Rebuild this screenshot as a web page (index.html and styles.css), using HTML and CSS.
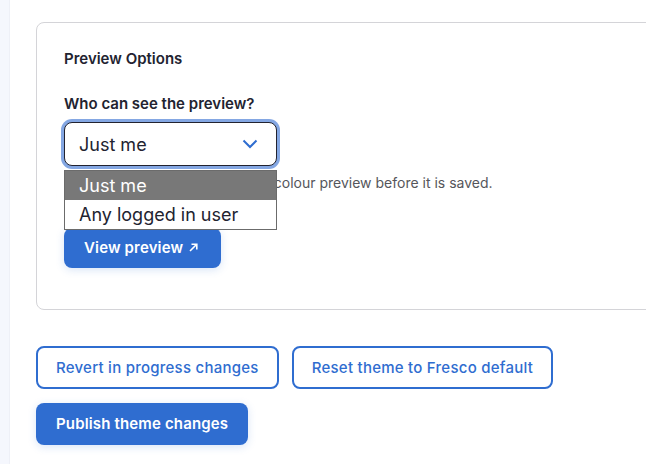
FILE: index.html
```html
<!DOCTYPE html>
<html>
<head>
<meta charset="utf-8">
<link rel="stylesheet" href="styles.css">
</head>
<body>
<div class="page">
  <div class="strip"></div>
  <main class="main">
    <section class="card">
      <h2 class="card-title">Preview Options</h2>
      <div class="form-item">
        <label class="label">Who can see the preview?</label>
        <div class="select-wrap">
          <div class="select">
            <span>Just me</span>
            <svg class="chevron" width="16" height="16" viewBox="0 0 16 16"><path d="M1.5 4.5 L8 11 L14.5 4.5" fill="none" stroke="#2f6dd0" stroke-width="2"/></svg>
          </div>
          <ul class="listbox">
            <li class="opt opt-active">Just me</li>
            <li class="opt">Any logged in user</li>
          </ul>
        </div>
        <p class="desc">Choose who is able to view the colour preview before it is saved.</p>
      </div>
      <button class="btn btn-primary btn-preview">View preview
        <svg class="ext" width="9" height="9" viewBox="0 0 9 9"><path d="M1 8 L7.5 1.5 M2.5 1.2 H7.8 V6.5" fill="none" stroke="#fff" stroke-width="1.6"/></svg>
      </button>
    </section>
    <div class="actions">
      <div class="row">
        <button class="btn btn-outline">Revert in progress changes</button>
        <button class="btn btn-outline">Reset theme to Fresco default</button>
      </div>
      <div class="row">
        <button class="btn btn-primary">Publish theme changes</button>
      </div>
    </div>
  </main>
</div>
</body>
</html>
```

FILE: styles.css
```css
* { box-sizing: border-box; }
html, body { margin: 0; padding: 0; }
body {
  font-family: Inter, "Noto Sans", sans-serif;
  color: #222330;
  background: #fff;
  overflow: hidden;
  width: 646px;
  height: 464px;
}
.page {
  display: flex;
  height: 464px;
}
.strip {
  width: 10px;
  flex: none;
  background: #f5f7fd;
  border-right: 1px solid #eef0f7;
}
.main {
  flex: none;
  padding: 22px 0 0 26px;
}
.card {
  width: 720px;
  border: 1px solid #d4d4d8;
  border-radius: 8px;
  padding: 26px 27px 41px;
}
.card-title {
  margin: 0;
  font-size: 15px;
  line-height: 20px;
  font-weight: 600;
}
.form-item {
  margin-top: 25px;
}
.label {
  display: block;
  font-size: 15px;
  line-height: 20px;
  font-weight: 600;
  margin-bottom: 8px;
}
.select-wrap {
  position: relative;
  width: 213px;
}
.select {
  height: 44px;
  border: 1px solid #222330;
  border-radius: 8px;
  box-shadow: 0 0 0 3px #84a7e3;
  display: flex;
  align-items: center;
  justify-content: space-between;
  padding: 0 18px 0 14px;
  font-size: 18px;
  color: #222330;
  background: #fff;
}
.chevron { display: block; }
.listbox {
  position: absolute;
  top: 48px;
  left: 0;
  width: 213px;
  margin: 0;
  padding: 0;
  list-style: none;
  border: 1px solid #6b6b6b;
  background: #fff;
  z-index: 2;
}
.opt {
  height: 29px;
  line-height: 29px;
  padding: 0 14px;
  font-size: 18px;
  color: #222330;
}
.opt-active {
  background: #787878;
  color: #fff;
}
.desc {
  margin: 7px 0 0;
  font-size: 14px;
  line-height: 20px;
  color: #55565b;
}
.btn {
  font-family: Inter, "Noto Sans", sans-serif;
  font-size: 15px;
  line-height: 20px;
  letter-spacing: 0.25px;
  border-radius: 8px;
  padding: 0 20px;
  height: 42px;
  cursor: pointer;
  display: inline-flex;
  align-items: center;
}
.btn-primary {
  background: #2f6dd0;
  color: #fff;
  border: 0;
  font-weight: 600;
  letter-spacing: 0.15px;
  box-shadow: 0 2px 8px rgba(47, 109, 208, 0.18);
}
.btn-preview {
  margin-top: 35px;
  height: 40px;
  padding: 0 23px 0 20px;
  gap: 6px;
}
.ext { display: block; margin-top: -2px; }
.btn-outline {
  background: #fff;
  color: #2f6dd0;
  border: 2px solid #2f6dd0;
  font-weight: 500;
  padding: 0 18px;
  height: 43px;
}
.actions {
  margin-top: 36px;
  display: flex;
  flex-direction: column;
  gap: 14px;
}
.row {
  display: flex;
  gap: 13px;
}
```
